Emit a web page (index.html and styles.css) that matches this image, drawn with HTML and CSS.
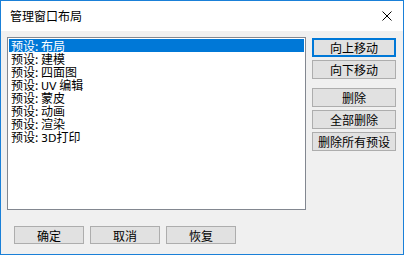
FILE: index.html
```html
<!DOCTYPE html>
<html>
<head>
<meta charset="utf-8">
<link rel="stylesheet" href="styles.css">
</head>
<body>
<div class="window">
  <div class="titlebar">
    <span class="title">管理窗口布局</span>
    <svg class="close" width="10" height="10" viewBox="0 0 10 10"><path d="M0.5 0.5 L9.5 9.5 M9.5 0.5 L0.5 9.5" stroke="#000" stroke-width="1" fill="none"/></svg>
  </div>
  <div class="content">
    <div class="main">
      <div class="listbox">
        <div class="item selected">预设: 布局</div>
        <div class="item">预设: 建模</div>
        <div class="item">预设: 四面图</div>
        <div class="item">预设: <span class="lat">UV</span> 编辑</div>
        <div class="item">预设: 蒙皮</div>
        <div class="item">预设: 动画</div>
        <div class="item">预设: 渲染</div>
        <div class="item">预设: <span class="lat">3D</span>打印</div>
      </div>
      <div class="side">
        <div class="group">
          <button class="btn default">向上移动</button>
          <button class="btn">向下移动</button>
        </div>
        <div class="group">
          <button class="btn">删除</button>
          <button class="btn">全部删除</button>
          <button class="btn">删除所有预设</button>
        </div>
      </div>
    </div>
    <div class="footer">
      <button class="btn wide">确定</button>
      <button class="btn wide">取消</button>
      <button class="btn wide">恢复</button>
    </div>
  </div>
</div>
</body>
</html>
```
FILE: styles.css
```css
* { box-sizing: border-box; }
html, body { margin: 0; padding: 0; background: #fff; }
body {
  font-family: "Noto Sans CJK SC", "Noto Sans", sans-serif;
  font-size: 12px;
  color: #000;
}
.window {
  width: 404px;
  height: 255px;
  border: 1px solid #1a80d8;
  display: flex;
  flex-direction: column;
  background: #f0f0f0;
}
.titlebar {
  height: 30px;
  background: #fff;
  display: flex;
  align-items: center;
  justify-content: space-between;
  padding: 0 11px 0 9px;
}
.title {
  font-size: 12px;
  line-height: 14px;
  color: #000;
}
.close { display: block; }
.content {
  flex: 1;
  display: flex;
  flex-direction: column;
  padding: 6px 7px 0 6px;
}
.main {
  display: flex;
  gap: 6px;
}
.listbox {
  width: 300px;
  height: 173px;
  border: 1px solid #828790;
  background: #fff;
  padding: 1px;
}
.item {
  height: 13px;
  line-height: 13px;
  padding-left: 2px;
  white-space: nowrap;
  font-size: 12px;
}
.item.selected {
  background: #0078d7;
  color: #fff;
}
.lat {
  font-family: "DejaVu Sans", "Liberation Sans", sans-serif;
  font-size: 11px;
}
.side {
  display: flex;
  flex-direction: column;
  gap: 9px;
  padding-top: 1px;
}
.group {
  display: flex;
  flex-direction: column;
  gap: 3px;
}
.btn {
  width: 84px;
  height: 19px;
  padding: 0;
  margin: 0;
  border: 1px solid #adadad;
  background: #e1e1e1;
  font-family: "Noto Sans CJK SC", "Noto Sans", sans-serif;
  font-size: 12px;
  line-height: 15px;
  color: #000;
}
.btn.default {
  border: 2px solid #0078d7;
}
.footer {
  display: flex;
  gap: 6px;
  padding-left: 7px;
  margin-top: 16px;
}
.btn.wide {
  width: 70px;
  height: 18px;
}
```
